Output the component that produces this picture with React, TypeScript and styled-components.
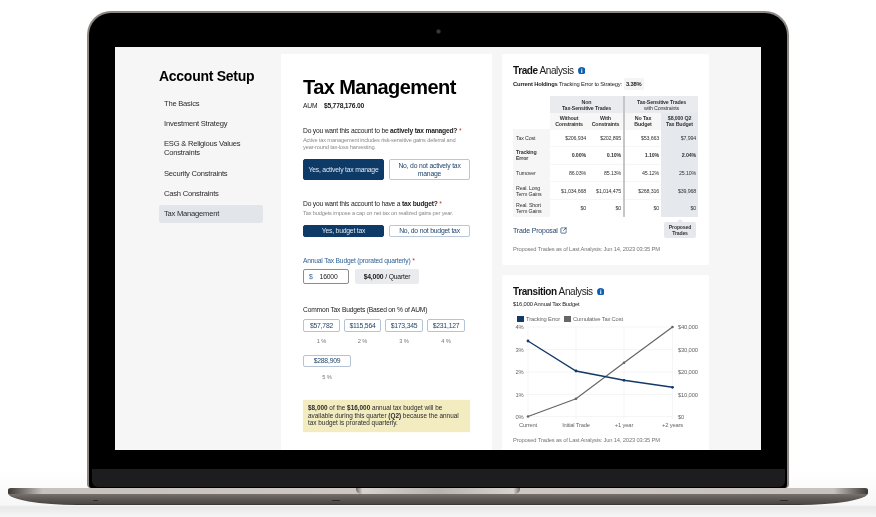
import styled, { createGlobalStyle } from "styled-components";
import { SquareArrowOutUpRight } from "lucide-react";

const GlobalStyle = createGlobalStyle`
  html, body {
    margin: 0;
    padding: 0;
    background: #fff;
    overflow: hidden;
  }
  * {
    box-sizing: border-box;
    letter-spacing: -0.03em;
  }
  body {
    font-family: "Liberation Sans", Arial, sans-serif;
    color: #1a1a1a;
  }
`;

const Stage = styled.div`
  width: 876px;
  height: 517px;
  padding-top: 11px;
  overflow: hidden;
  background: linear-gradient(to bottom, #fff 0, #fff 470px, #f7f7f7 505px, #e8e8e8 507px, #f6f6f6 517px);
`;

const Lid = styled.div`
  width: 702px;
  height: 477px;
  margin-left: 87px;
  padding-bottom: 1px;
  background: #000;
  border: 2px solid #8d8784;
  border-bottom: 0;
  border-radius: 24px 24px 4px 4px;
  display: flex;
  flex-direction: column;
  align-items: center;
`;

const CameraRow = styled.div`
  height: 34px;
  display: flex;
  align-items: center;
  justify-content: center;
  padding-top: 2px;
`;

const Camera = styled.div`
  width: 5px;
  height: 5px;
  border-radius: 50%;
  background: #3a3d42;
  border: 1px solid #1f2023;
`;

const Screen = styled.div`
  width: 646px;
  height: 403px;
  flex: none;
  display: flex;
  overflow: hidden;
  background: #f6f6f6;
  filter: blur(0.3px);
`;

const BezelBand = styled.div`
  width: 693px;
  height: 18px;
  margin-top: 19px;
  background: #1d1d1f;
  border-radius: 0 0 6px 6px;
`;

const Base = styled.div`
  position: relative;
  width: 860px;
  height: 17px;
  margin-left: 8px;
  border-radius: 3px 3px 70px 70px / 2px 2px 12px 12px;
  background:
    linear-gradient(to right, #3b3836 0, #c8c2bf 4%, #cfc8c5 50%, #c8c2bf 96%, #3b3836 100%) top / 100% 6px no-repeat,
    linear-gradient(to bottom, #77716e 6px, #625d5a 10px, #494644 16px, #2d2b2a 17px);
`;

const Hinge = styled.div`
  position: absolute;
  top: 0;
  left: 348px;
  width: 164px;
  height: 6px;
  border-radius: 0 0 5px 5px;
  background: linear-gradient(to right, #6f6a67 0, #d8d2cf 4%, #b9b3b0 50%, #d8d2cf 96%, #6f6a67 100%);
`;

const Foot = styled.span<{ $left: number; $width: number }>`
  position: absolute;
  top: 12px;
  left: ${(props) => props.$left}px;
  width: ${(props) => props.$width}px;
  height: 1px;
  border-radius: 1px;
  background: #2e2c2b;
`;

const Sidebar = styled.aside`
  width: 166px;
  flex: none;
  padding: 21px 18px 0 44px;
`;

const SideTitle = styled.h2`
  margin: 0 0 11px;
  font-size: 14px;
  line-height: 16px;
  font-weight: 700;
  letter-spacing: -0.27px;
  color: #000;
`;

const NavItem = styled.div<{ $active?: boolean }>`
  padding: 4px 5px 5px;
  margin-bottom: 2.2px;
  font-size: 7.6px;
  line-height: 9px;
  color: #2b2b2b;
  border-radius: 2px;
  background: ${(props) => (props.$active ? "#e2e5ea" : "transparent")};
`;

const Main = styled.main`
  width: 211px;
  flex: none;
  margin-top: 7px;
  padding: 21px 22px 0;
  background: #fff;
`;

const PageTitle = styled.h1`
  margin: 0;
  font-size: 20px;
  line-height: 24px;
  font-weight: 700;
  letter-spacing: -0.57px;
  color: #000;
  white-space: nowrap;
`;

const Aum = styled.div`
  margin-top: 3px;
  font-size: 6.7px;
  line-height: 8px;
  b { margin-left: 5px; }
`;

const Question = styled.div<{ $top: number; $blue?: boolean }>`
  margin-top: ${(props) => props.$top}px;
  font-size: 6.7px;
  line-height: 8px;
  white-space: nowrap;
  color: ${(props) => (props.$blue ? "#2f6196" : "#222")};
`;

const Req = styled.span`
  color: #c23a3a;
`;

const Hint = styled.div`
  margin-top: 2px;
  width: 165px;
  font-size: 5.7px;
  line-height: 7px;
  color: #8a8a8a;
`;

const ButtonRow = styled.div<{ $top: number; $height: number }>`
  display: flex;
  gap: 5px;
  margin-top: ${(props) => props.$top}px;
  height: ${(props) => props.$height}px;
`;

const Choice = styled.div<{ $on?: boolean }>`
  width: 81px;
  padding: 0 4px;
  display: flex;
  align-items: center;
  justify-content: center;
  text-align: center;
  font-size: 6.8px;
  line-height: 7.6px;
  border-radius: 2px;
  color: ${(props) => (props.$on ? "#dfe6ee" : "#23466f")};
  background: ${(props) => (props.$on ? "#0e3a68" : "#fff")};
  border: 1px solid ${(props) => (props.$on ? "#0e3a68" : "#b9c7d8")};
`;

const BudgetRow = styled.div`
  display: flex;
  gap: 6px;
  margin-top: 4px;
  height: 15px;
`;

const AmountInput = styled.div`
  width: 46px;
  display: flex;
  align-items: center;
  padding-left: 5px;
  font-size: 6.8px;
  border: 1px solid #8c8c8c;
  border-radius: 2px;
  span { color: #2f6196; margin-right: 7px; }
`;

const QuarterChip = styled.div`
  width: 64px;
  display: flex;
  align-items: center;
  justify-content: center;
  gap: 2px;
  font-size: 6.8px;
  background: #e9ebee;
  border-radius: 2px;
`;

const BudgetGrid = styled.div`
  display: flex;
  flex-wrap: wrap;
  gap: 9.5px 4px;
  margin-top: 5px;
`;

const BudgetOption = styled.div<{ $width: number }>`
  width: ${(props) => props.$width}px;
  display: flex;
  flex-direction: column;
  align-items: center;
`;

const BudgetChip = styled.div`
  width: 100%;
  height: 12.5px;
  display: flex;
  align-items: center;
  justify-content: center;
  font-size: 6.8px;
  color: #23466f;
  border: 1px solid #b4c3d5;
  border-radius: 2px;
`;

const Percent = styled.div`
  margin-top: 6.5px;
  height: 7px;
  font-size: 5.7px;
  line-height: 7px;
  color: #777;
`;

const Notice = styled.div`
  width: 167px;
  height: 31.5px;
  margin-top: 19.5px;
  padding: 4px 5px;
  font-size: 6.4px;
  line-height: 7.6px;
  color: #2a2a2a;
  background: #f2ecc0;
  border-radius: 2px;
  box-shadow: 0 0 1px #e3dcae;
  &, & * { letter-spacing: 0; }
`;

const RightColumn = styled.section`
  flex: 1;
  padding: 7px 0 0 10px;
  display: flex;
  flex-direction: column;
  gap: 10px;
`;

const Card = styled.div<{ $height: number }>`
  width: 207px;
  height: ${(props) => props.$height}px;
  flex: none;
  padding: 10px 11px 0;
  background: #fff;
  border-radius: 2px;
`;

const CardTitle = styled.div`
  display: flex;
  align-items: center;
  gap: 4px;
  font-size: 10px;
  line-height: 13px;
  color: #222;
  &, & * { letter-spacing: -0.4px; }
  b { color: #111; }
`;

const CardLine = styled.div<{ $top: number }>`
  display: flex;
  align-items: center;
  gap: 2px;
  margin-top: ${(props) => props.$top}px;
  font-size: 5.8px;
  line-height: 10px;
  color: #222;
  white-space: nowrap;
`;

const Score = styled.span`
  padding: 1px 2px;
  font-weight: 700;
  background: #f4f4f4;
  border-radius: 2px;
`;

const TradeTable = styled.table`
  width: 185px;
  margin-top: 6px;
  table-layout: fixed;
  border-collapse: collapse;
  font-size: 5.3px;
  line-height: 6px;
`;

const GroupHead = styled.th<{ $divider?: boolean }>`
  height: 17px;
  padding: 0;
  background: #e9ebee;
  font-weight: 700;
  color: #333;
  border-left: ${(props) => (props.$divider ? "2px solid #c6c6c6" : "0")};
  span { font-weight: 400; }
`;

const SubHead = styled.th<{ $divider?: boolean; $picked?: boolean }>`
  height: 16px;
  padding: 0;
  font-weight: 700;
  color: #333;
  background: ${(props) => (props.$picked ? "#e5e8ed" : "#f7f7f7")};
  border-left: ${(props) => (props.$divider ? "2px solid #c6c6c6" : "0")};
`;

const RowLabel = styled.td<{ $bold?: boolean }>`
  padding: 0 3px;
  background: #f6f6f6;
  color: #333;
  font-weight: ${(props) => (props.$bold ? 700 : 400)};
`;

const Value = styled.td<{ $divider?: boolean; $picked?: boolean; $bold?: boolean }>`
  height: 17.6px;
  padding: 0 2px 0 0;
  text-align: right;
  color: #333;
  font-weight: ${(props) => (props.$bold ? 700 : 400)};
  background: ${(props) => (props.$picked ? "#e5e8ed" : "#fff")};
  border-left: ${(props) => (props.$divider ? "2px solid #c6c6c6" : "0")};
  border-top: 1px solid ${(props) => (props.$picked ? "#e5e8ed" : "#f6f6f6")};
`;

const ProposalRow = styled.div`
  display: flex;
  justify-content: space-between;
  align-items: flex-start;
  margin-top: 5px;
  padding-right: 2px;
`;

const ProposalLink = styled.a`
  display: flex;
  align-items: center;
  gap: 2px;
  margin-top: 5px;
  font-size: 7px;
  line-height: 8px;
  color: #23466f;
`;

const ProposedTag = styled.div`
  position: relative;
  width: 32px;
  height: 16px;
  display: flex;
  align-items: center;
  justify-content: center;
  text-align: center;
  font-size: 5.1px;
  line-height: 6px;
  font-weight: 700;
  color: #333;
  background: #e5e8ed;
  border-radius: 2px;
  &::before {
    content: "";
    position: absolute;
    top: -3px;
    left: 13px;
    border-left: 3px solid transparent;
    border-right: 3px solid transparent;
    border-bottom: 3px solid #e5e8ed;
  }
`;

const Stamp = styled.div<{ $top: number }>`
  margin-top: ${(props) => props.$top}px;
  font-size: 5.8px;
  line-height: 7px;
  color: #777;
  white-space: nowrap;
`;

const Legend = styled.div`
  display: flex;
  gap: 4px;
  margin: 7px 0 0 4px;
  font-size: 5.8px;
  line-height: 6px;
  color: #666;
`;

const LegendItem = styled.div`
  display: flex;
  align-items: center;
  gap: 2px;
`;

const Swatch = styled.span<{ $color: string }>`
  width: 7px;
  height: 6px;
  background: ${(props) => props.$color};
`;

const ChartSvg = styled.svg`
  display: block;
  width: 185px;
  height: 106px;
  margin-top: 1px;
  font-family: "Liberation Sans", Arial, sans-serif;
  font-size: 5.8px;
  fill: #666;
`;

const InfoDot = () => (
  <svg width="7.5" height="7.5" viewBox="0 0 14 14">
    <circle cx="7" cy="7" r="7" fill="#0f5fb0" />
    <rect x="6" y="6" width="2" height="5" fill="#fff" />
    <rect x="6" y="3" width="2" height="2" fill="#fff" />
  </svg>
);

const navItems = [
  "The Basics",
  "Investment Strategy",
  "ESG & Religious Values Constraints",
  "Security Constraints",
  "Cash Constraints",
  "Tax Management",
];

const budgets = [
  { amount: "$57,782", pct: "1 %", width: 37 },
  { amount: "$115,564", pct: "2 %", width: 37 },
  { amount: "$173,345", pct: "3 %", width: 38 },
  { amount: "$231,127", pct: "4 %", width: 38 },
  { amount: "$288,909", pct: "5 %", width: 48 },
];

const rows = [
  { label: "Tax Cost", values: ["$206,934", "$202,895", "$53,663", "$7,994"] },
  { label: "Tracking Error", bold: true, values: ["0.00%", "0.10%", "1.10%", "2.04%"] },
  { label: "Turnover", values: ["86.03%", "85.13%", "45.12%", "25.10%"] },
  { label: "Real. Long Term Gains", values: ["$1,034,668", "$1,014,475", "$268,316", "$39,968"] },
  { label: "Real. Short Term Gains", values: ["$0", "$0", "$0", "$0"] },
];

// chart coords are relative to the svg's top left corner
const xs = [15, 63, 111, 159.5];
const gridY = [4, 26.5, 49, 71.5, 93.5];
const pctLabels = ["4%", "3%", "2%", "1%", "0%"];
const usdLabels = ["$40,000", "$30,000", "$20,000", "$10,000", "$0"];
const xLabels = ["Current", "Initial Trade", "+1 year", "+2 years"];
const tracking = [18, 48, 57.3, 64.3];
const cost = [93.5, 75.7, 39.7, 4];

const points = (ys: number[]) => ys.map((y, i) => `${xs[i]},${y}`).join(" ");

const TransitionChart = () => (
  <ChartSvg viewBox="0 0 185 106">
    {gridY.map((y) => (
      <line key={y} x1={13} x2={160} y1={y} y2={y} stroke="#f2f2f2" strokeWidth="0.8" />
    ))}
    {xs.map((x) => (
      <line key={x} x1={x} x2={x} y1={4} y2={96} stroke="#f2f2f2" strokeWidth="0.8" />
    ))}
    {pctLabels.map((t, i) => (
      <text key={t} x={10.5} y={gridY[i] + 2} textAnchor="end">{t}</text>
    ))}
    {usdLabels.map((t, i) => (
      <text key={t} x={165} y={gridY[i] + 2}>{t}</text>
    ))}
    {xLabels.map((t, i) => (
      <text key={t} x={xs[i]} y={104} textAnchor="middle">{t}</text>
    ))}
    <polyline points={points(cost)} fill="none" stroke="#666" strokeWidth="1.2" />
    <polyline points={points(tracking)} fill="none" stroke="#12396a" strokeWidth="1.4" />
    {cost.map((y, i) => (
      <circle key={i} cx={xs[i]} cy={y} r="1.3" fill="#666" />
    ))}
    {tracking.map((y, i) => (
      <circle key={i} cx={xs[i]} cy={y} r="1.4" fill="#12396a" />
    ))}
  </ChartSvg>
);

export default function App() {
  return (
    <Stage>
      <GlobalStyle />
      <Lid>
        <CameraRow>
          <Camera />
        </CameraRow>
        <Screen>
          <Sidebar>
            <SideTitle>Account Setup</SideTitle>
            {navItems.map((item) => (
              <NavItem key={item} $active={item === "Tax Management"}>
                {item}
              </NavItem>
            ))}
          </Sidebar>

          <Main>
            <PageTitle>Tax Management</PageTitle>
            <Aum>
              AUM <b>$5,778,176.00</b>
            </Aum>

            <Question $top={17}>
              Do you want this account to be <b>actively tax managed?</b> <Req>*</Req>
            </Question>
            <Hint>
              Active tax management includes risk-sensitive gains deferral and year-round tax-loss harvesting.
            </Hint>
            <ButtonRow $top={8} $height={21}>
              <Choice $on>Yes, actively tax manage</Choice>
              <Choice>No, do not actively tax manage</Choice>
            </ButtonRow>

            <Question $top={20}>
              Do you want this account to have a <b>tax budget?</b> <Req>*</Req>
            </Question>
            <Hint>Tax budgets impose a cap on net tax on realized gains per year.</Hint>
            <ButtonRow $top={8} $height={12}>
              <Choice $on>Yes, budget tax</Choice>
              <Choice>No, do not budget tax</Choice>
            </ButtonRow>

            <Question $top={20} $blue>
              Annual Tax Budget (prorated quarterly) <Req>*</Req>
            </Question>
            <BudgetRow>
              <AmountInput>
                <span>$</span>16000
              </AmountInput>
              <QuarterChip>
                <b>$4,000</b> / Quarter
              </QuarterChip>
            </BudgetRow>

            <Question $top={22}>Common Tax Budgets (Based on % of AUM)</Question>
            <BudgetGrid>
              {budgets.map((b) => (
                <BudgetOption key={b.amount} $width={b.width}>
                  <BudgetChip>{b.amount}</BudgetChip>
                  <Percent>{b.pct}</Percent>
                </BudgetOption>
              ))}
            </BudgetGrid>

            <Notice>
              <b>$8,000</b> of the <b>$16,000</b> annual tax budget will be available during this quarter{" "}
              <b>(Q2)</b> because the annual tax budget is prorated quarterly.
            </Notice>
          </Main>

          <RightColumn>
            <Card $height={211}>
              <CardTitle>
                <span>
                  <b>Trade</b> Analysis
                </span>
                <InfoDot />
              </CardTitle>
              <CardLine $top={1}>
                <span>
                  <b>Current Holdings</b> Tracking Error to Strategy:
                </span>
                <Score>3.38%</Score>
              </CardLine>
              <TradeTable>
                <colgroup>
                  <col style={{ width: 37 }} />
                  <col style={{ width: 38 }} />
                  <col style={{ width: 36 }} />
                  <col style={{ width: 37 }} />
                  <col style={{ width: 37 }} />
                </colgroup>
                <thead>
                  <tr>
                    <td />
                    <GroupHead colSpan={2}>
                      Non
                      <br />
                      Tax-Sensitive Trades
                    </GroupHead>
                    <GroupHead colSpan={2} $divider>
                      Tax-Sensitive Trades
                      <br />
                      <span>with Constraints</span>
                    </GroupHead>
                  </tr>
                  <tr>
                    <td />
                    <SubHead>
                      Without
                      <br />
                      Constraints
                    </SubHead>
                    <SubHead>
                      With
                      <br />
                      Constraints
                    </SubHead>
                    <SubHead $divider>
                      No Tax
                      <br />
                      Budget
                    </SubHead>
                    <SubHead $picked>
                      $8,000 Q2
                      <br />
                      Tax Budget
                    </SubHead>
                  </tr>
                </thead>
                <tbody>
                  {rows.map((row) => (
                    <tr key={row.label}>
                      <RowLabel $bold={row.bold}>{row.label}</RowLabel>
                      {row.values.map((v, i) => (
                        <Value key={i} $bold={row.bold} $divider={i === 2} $picked={i === 3}>
                          {v}
                        </Value>
                      ))}
                    </tr>
                  ))}
                </tbody>
              </TradeTable>
              <ProposalRow>
                <ProposalLink>
                  Trade Proposal <SquareArrowOutUpRight size={7} strokeWidth={2.5} />
                </ProposalLink>
                <ProposedTag>
                  Proposed
                  <br />
                  Trades
                </ProposedTag>
              </ProposalRow>
              <Stamp $top={8}>Proposed Trades as of Last Analysis: Jun 14, 2023 03:35 PM</Stamp>
            </Card>

            <Card $height={185}>
              <CardTitle>
                <span>
                  <b>Transition</b> Analysis
                </span>
                <InfoDot />
              </CardTitle>
              <CardLine $top={1}>$16,000 Annual Tax Budget</CardLine>
              <Legend>
                <LegendItem>
                  <Swatch $color="#12396a" />
                  Tracking Error
                </LegendItem>
                <LegendItem>
                  <Swatch $color="#666" />
                  Cumulative Tax Cost
                </LegendItem>
              </Legend>
              <TransitionChart />
              <Stamp $top={8}>Proposed Trades as of Last Analysis: Jun 14, 2023 03:35 PM</Stamp>
            </Card>
          </RightColumn>
        </Screen>
        <BezelBand />
      </Lid>
      <Base>
        <Hinge />
        <Foot $left={85} $width={5} />
        <Foot $left={324} $width={8} />
        <Foot $left={772} $width={8} />
      </Base>
    </Stage>
  );
}
